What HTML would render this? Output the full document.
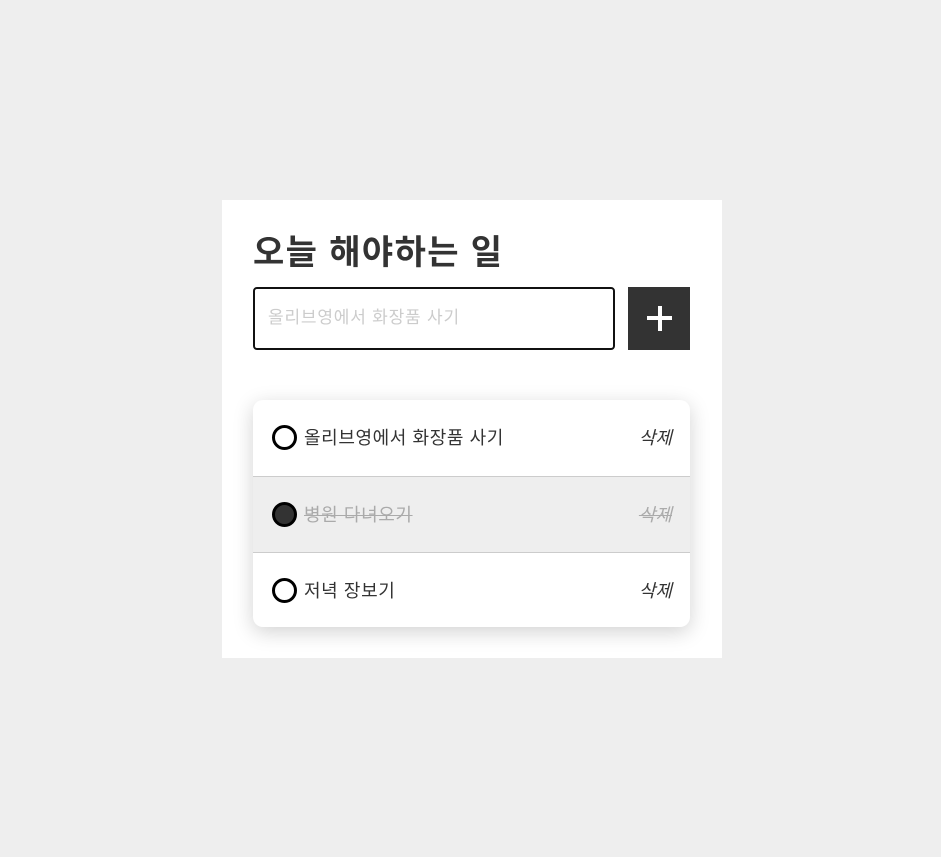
<!DOCTYPE html>
<html><head><meta charset="utf-8"><style>
*{box-sizing:border-box;margin:0;padding:0}
body{width:941px;height:857px;background:#eee;font-family:"Liberation Sans","Noto Sans CJK KR",sans-serif;position:relative;overflow:hidden}
.card{position:absolute;left:222px;top:200px;width:500px;height:458px;background:#fff}
h1{position:absolute;left:31px;top:30px;font-size:34px;line-height:46px;font-weight:bold;color:#333;letter-spacing:1.4px}
.inp{position:absolute;left:31px;top:87px;width:362px;height:63px;border:2px solid #111;border-radius:4px;font-size:17px;color:#ccc;padding-left:13px;line-height:58px;letter-spacing:0.8px}
.btn{position:absolute;left:406px;top:87px;width:62px;height:63px;background:#333}
.btn:before{content:"";position:absolute;left:19px;top:29px;width:25px;height:4px;background:#fff}
.btn:after{content:"";position:absolute;left:29.5px;top:19px;width:4px;height:25px;background:#fff}
.list{position:absolute;left:31px;top:200px;width:437px;height:227px;border-radius:10px;background:#fff;box-shadow:0 5px 20px rgba(0,0,0,0.18);overflow:hidden}
.row{height:76px;position:relative;font-size:18px;color:#333}
.row+.row{border-top:1px solid #ccc}
.row.done{background:#eee;color:#aaa}
.c{position:absolute;left:19px;top:25px;width:25px;height:25px;border:3px solid #000;border-radius:50%}
.done .c{background:#333}
.t{position:absolute;left:51px;top:1px;line-height:75px;letter-spacing:0.6px}
.d{position:absolute;right:18px;top:1px;line-height:75px;font-style:italic}
.done .t,.done .d{text-decoration:line-through}
</style></head><body>
<div class="card">
<h1>오늘 해야하는 일</h1>
<div class="inp">올리브영에서 화장품 사기</div>
<div class="btn"></div>
<div class="list">
<div class="row"><div class="c"></div><div class="t">올리브영에서 화장품 사기</div><div class="d">삭제</div></div>
<div class="row done"><div class="c"></div><div class="t">병원 다녀오기</div><div class="d">삭제</div></div>
<div class="row"><div class="c"></div><div class="t">저녁 장보기</div><div class="d">삭제</div></div>
</div>
</div>
</body></html>
